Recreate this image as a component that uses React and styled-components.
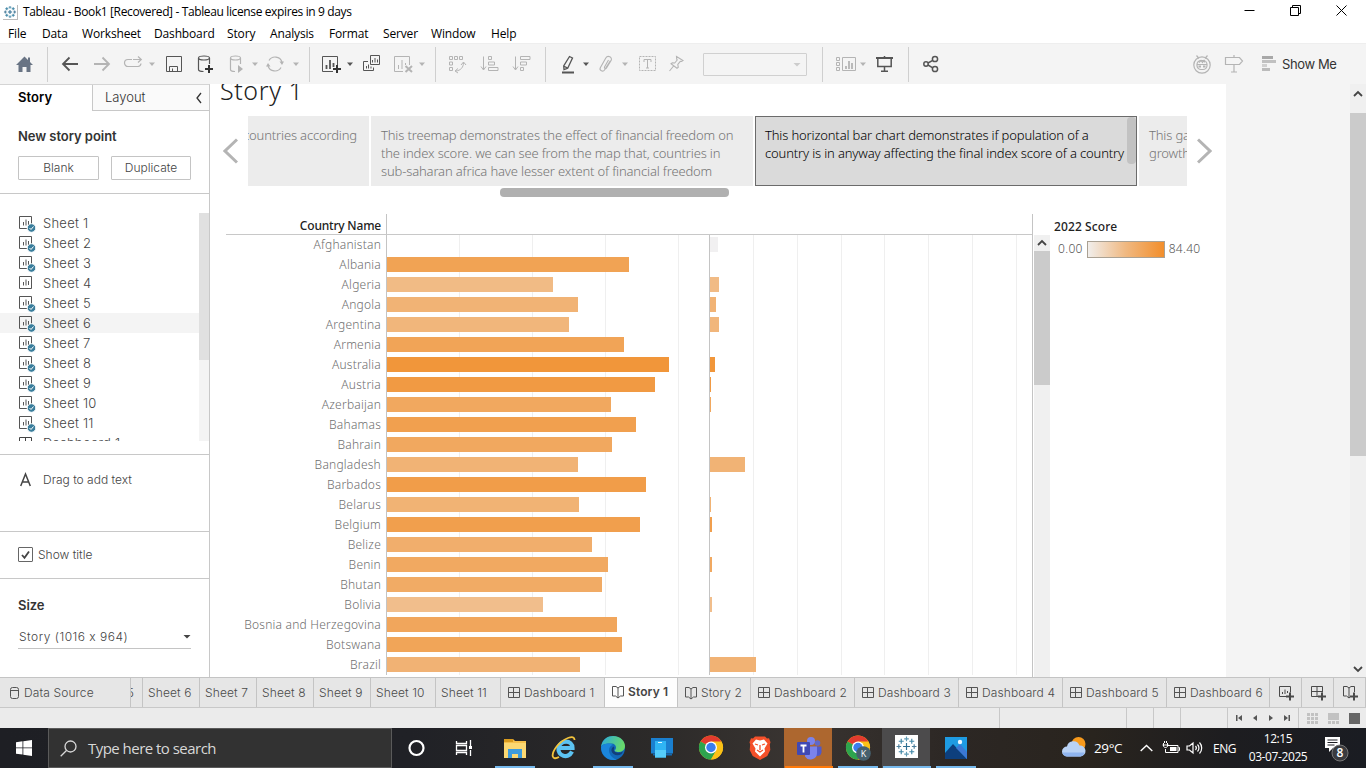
import React from 'react';
import styled, { createGlobalStyle, css } from 'styled-components';

const Global = createGlobalStyle`
  *, *::before, *::after { box-sizing: border-box; }
  body { margin: 0; background: #fff; overflow: hidden; }
  svg { display: block; flex: none; }
`;

const UI = '"Open Sans", "Noto Sans", sans-serif';
const BENTON = 'Inter, "Noto Sans", sans-serif';
const BOOK = '"Noto Sans", "Open Sans", sans-serif';

const Window = styled.div`
  width: 1366px; height: 768px; display: flex; flex-direction: column; overflow: hidden;
  font-family: ${BENTON}; color: #333;
`;

/* ---------- title bar and menus ---------- */
const TitleBar = styled.header`
  height: 24px; display: flex; align-items: center; padding-left: 3px; font: 12px/24px ${UI}; color: #000;
`;
const LogoBox = styled.div`
  width: 15px; height: 15px; border-right: 1px solid #bbb; border-bottom: 1px solid #bbb; margin-right: 5px;
`;
const WindowTitle = styled.span`flex: 1; letter-spacing: -0.37px; white-space: pre;`;
const WindowControls = styled.div`display: flex; gap: 35px; padding-right: 19px; margin-top: -4px;`;
const MenuBar = styled.nav`
  height: 19px; display: flex; align-items: center; padding-left: 8px; font: 12px/19px ${UI}; color: #000;
`;
const MenuItem = styled.span`width: ${p => p.$w}px; letter-spacing: -0.15px; white-space: nowrap;`;

/* ---------- toolbar ---------- */
const Toolbar = styled.div`
  height: 41px; background: #f4f4f4; display: flex; align-items: center; border-top: 1px solid #eee;
`;
const Tool = styled.div`
  width: ${p => p.$w || 20}px; height: 20px; margin-left: ${p => p.$gap || 0}px;
  color: ${p => (p.$off ? '#b4b4b4' : '#555')};
`;
const Separator = styled.div`width: 1px; height: 35px; background: #cfcfcf; margin-left: ${p => p.$gap}px;`;
const ToolSelect = styled.div`
  width: 104px; height: 23px; border: 1px solid #d0d0d0; border-radius: 1px; margin-left: 16px;
  display: flex; align-items: center; justify-content: flex-end; padding-right: 5px; color: #ccc;
`;
const ShowMe = styled.span`font: 13px/20px ${BENTON}; color: #333; margin-left: 4px; letter-spacing: -0.4px; white-space: nowrap;`;

/* ---------- workspace ---------- */
const Workspace = styled.main`height: 593px; display: flex;`;
const Sidebar = styled.aside`
  width: 210px; border-right: 1px solid #c8c8c8; border-top: 1px solid #d4d4d4; display: flex; flex-direction: column;
`;
const PaneTabs = styled.div`height: 26px; display: flex; font-size: 13px; line-height: 25px;`;
const ActivePane = styled.div`width: 92px; padding-left: 18px; font-weight: 600; color: #000; letter-spacing: 0.05px;`;
const OtherPane = styled.div`
  flex: 1; border-left: 1px solid #c8c8c8; border-bottom: 1px solid #c8c8c8; background: #fafafa; color: #333;
  padding: 0 6px 0 12px; display: flex; justify-content: space-between; align-items: center; font-weight: 300;
`;
const Section = styled.section`
  height: ${p => p.$h}px; border-bottom: ${p => (p.$last ? 0 : 1)}px solid #c8c8c8;
`;
const NewPoint = styled(Section)`padding: 15px 18px 0;`;
const Heading = styled.h2`
  margin: 0; font: 600 13px/20px ${BENTON}; color: #333; letter-spacing: -0.05px;
`;
const ButtonRow = styled.div`display: flex; gap: 12px; margin-top: 10px;`;
const PaneButton = styled.button`
  width: ${p => p.$w}px; height: 24px; padding: 0 0 1px; background: #fff; border: 1px solid #c4c4c4; border-radius: 1px;
  font: 300 12px/20px ${BENTON}; color: #444; letter-spacing: 0px;
`;
const SheetSection = styled(Section)`padding-top: 19px; display: flex; align-items: flex-start;`;
const SheetList = styled.ul`
  flex: 1; height: 228px; overflow: hidden; margin: 0; padding: 0; list-style: none;
`;
const SheetRow = styled.li`
  height: 20px; display: flex; align-items: center; padding-left: 18px; gap: 5px; font-size: 13px; font-weight: 300; color: #444;
  letter-spacing: 0.25px; background: ${p => (p.$hover ? '#f4f4f4' : 'transparent')};
`;
const PaneTrack = styled.div`width: 10px; height: 228px; background: #f4f4f4;`;
const PaneThumb = styled.div`height: 147px; background: #e0e0e0;`;
const DragText = styled(Section)`
  display: flex; padding: 15px 0 0 20px; gap: 12px; font-size: 12px; font-weight: 300; line-height: 20px; color: #444;
`;
const CheckSection = styled(Section)`
  display: flex; align-items: center; gap: 5px; padding: 0 0 1px 18px; font-size: 12px; font-weight: 300; color: #444;
`;
const CheckBox = styled.span`
  width: 15px; height: 15px; border: 1px solid #666; border-radius: 1px; display: flex; color: #444;
`;
const SizeSection = styled(Section)`padding: 16px 18px 0;`;
const SizeSelect = styled.div`
  height: 23px; margin-top: 11px; border-bottom: 1px solid #c4c4c4; display: flex; justify-content: space-between;
  align-items: center; padding: 0 0 2px 1px; font-size: 12px; font-weight: 300; color: #444; letter-spacing: 0.5px;
`;

/* ---------- story canvas ---------- */
const Canvas = styled.div`width: 1016px; height: 593px; overflow: hidden; background: #fff; font-family: ${BOOK};`;
const StoryTitle = styled.h1`
  margin: -10px 0 0 10px; height: 42px; font: 300 25px/32px ${BOOK}; color: #222; letter-spacing: 0.6px;
`;
const Navigator = styled.div`height: 70px; display: flex; align-items: center;`;
const Arrow = styled.div`width: ${p => p.$w}px; padding-left: ${p => p.$pad}px; color: #b4b4b4; margin-top: -1px;`;
const Points = styled.div`width: 939px; height: 70px; display: flex; gap: 2px; overflow: hidden; margin-right: 10px;`;
const Point = styled.div`
  flex: none; width: ${p => p.$w}px; height: 70px; display: flex; background: #ececec; color: #757575;
  font: 300 13px/18px ${BOOK}; padding: 10px 0 0 10px; letter-spacing: -0.15px; white-space: pre;
  ${p => p.$clipLeft && css`justify-content: flex-end; padding: 10px 12px 0 0;`}
  ${p => p.$current && css`
    background: #dadada; border: 1px solid #6b6b6b; color: #000; justify-content: space-between; padding: 9px 0 0 9px;
  `}
`;
const PointThumb = styled.div`flex: none; width: 9px; height: 47px; margin-top: -9px; background: #c2c2c2; border-radius: 4px;`;
const NavScroll = styled.div`width: 229px; height: 9px; margin: 2px 0 17px 290px; background: #b0b0b0; border-radius: 4px;`;

const Viz = styled.div`display: flex; height: 463px;`;
const Table = styled.div`width: 807px; margin-left: 16px; border-right: 1px solid #c4c4c4;`;
const TableHead = styled.div`height: 21px; display: flex; border-bottom: 1px solid #c8c8c8;`;
const HeadCell = styled.div`
  width: 161px; border-right: 1px solid #c4c4c4; padding: 2px 5px 0 0; text-align: right;
  font: 500 12px/20px ${BOOK}; color: #222; letter-spacing: -0.2px;
`;
const Row = styled.div`height: 20px; display: flex;`;
const RowName = styled.div`
  width: 161px; border-right: 1px solid #c4c4c4; padding-right: 5px; text-align: right; white-space: nowrap;
  font: 300 12px/20px ${BOOK}; color: #6e6e6e; letter-spacing: 0.22px;
`;
const Lane = styled.div`
  width: ${p => p.$w}px; padding-top: 2px;
  background: repeating-linear-gradient(90deg, transparent 0 ${p => p.$step - 1}px, #efefef ${p => p.$step - 1}px ${p => p.$step}px);
  ${p => p.$axis && css`border-right: 1px solid #c4c4c4;`}
`;
const Bar = styled.div`height: 15px;`;
const Track = styled.div`
  width: ${p => p.$w}px; margin: ${p => p.$m}; background: #f0f0f0; display: flex; flex-direction: column;
  align-items: center; color: #444;
`;
const TrackButton = styled.div`
  flex: none; height: ${p => p.$h}px; display: flex; align-items: center; ${p => p.$end && css`margin-top: auto;`}
`;
const TrackThumb = styled.div`flex: none; width: 100%; height: ${p => p.$h}px; background: #cbcbcb;`;
const Legend = styled.div`margin-left: 4px; font-size: 12px; line-height: 20px;`;
const LegendTitle = styled.div`margin-top: 3px; font-weight: 500; letter-spacing: 0.1px; color: #222;`;
const LegendScale = styled.div`
  display: flex; align-items: center; padding: 2px 0 0 4px; color: #555; font-weight: 300; letter-spacing: 0.3px;
`;
const Ramp = styled.div`
  width: 78px; height: 17px; margin: 0 4px; border: 1px solid #aaa193;
  background: linear-gradient(90deg, #f1eeeb, #f0b880 50%, #f28e2b);
`;
const Gutter = styled.div`flex: 1; background: #f4f4f4;`;

/* ---------- sheet tabs and status ---------- */
const TabStrip = styled.div`
  height: 31px; display: flex; background: #e6e6e6; border-top: 1px solid #c4c4c4; border-bottom: 1px solid #c8c8c8;
`;
const Tab = styled.div`
  width: ${p => p.$w}px; height: 29px; border-right: 1px solid #c4c4c4; display: flex; align-items: center;
  padding-left: ${p => p.$pad || 5}px; gap: ${p => p.$gap || 4}px; overflow: hidden; white-space: nowrap; font-size: 12px;
  font-weight: 300; color: #4a4a4a; letter-spacing: 0.12px;
  ${p => p.$tail && css`justify-content: flex-end; padding: 0 8px 0 0;`}
  ${p => p.$active && css`background: #fdfdfd; font-weight: 600; color: #444; padding-bottom: 2px;`}
`;
const StatusBar = styled.div`height: 20px; background: #ebebeb; display: flex; color: #555;`;
const StatusCell = styled.div`
  width: ${p => p.$w}px; border-right: ${p => (p.$last ? 0 : 1)}px solid #c8c8c8; display: flex; align-items: center;
  padding-left: ${p => p.$pad || 0}px; gap: ${p => p.$gap || 0}px;
`;

/* ---------- taskbar ---------- */
const Taskbar = styled.footer`
  height: 40px; display: flex; color: #fff; font-family: ${UI};
  background: linear-gradient(90deg, #1e1f24 0%, #202126 30%, #2c2a29 48%, #393431 58%, #2c2724 70%, #29241e 80%, #1d1d20 90%, #1a1c22 100%);
`;
const StartButton = styled.div`width: 48px; display: flex; align-items: center; justify-content: center;`;
const SearchBox = styled.div`
  width: 344px; background: #323232; border: 1px solid #5a5a5a; display: flex; align-items: center; padding-left: 11px;
  gap: 11px; font-size: 15px; color: #d8d8d8; letter-spacing: -0.53px;
`;
const AppButton = styled.div`
  width: 49px; height: 40px; display: flex; flex-direction: column; align-items: center; padding-top: 7px;
  justify-content: space-between;
  ${p => p.$bg && css`background: linear-gradient(90deg, ${p.$bg} 48px, transparent 48px);`}
`;
const RunningLine = styled.div`width: ${p => p.$w || 40}px; height: 2px; background: ${p => p.$c || 'transparent'};`;
const Tray = styled.div`flex: 1; display: flex; align-items: center; padding-left: 81px;`;
const TrayText = styled.span`
  font-size: ${p => p.$size || 12}px; width: ${p => p.$w}px; margin-left: ${p => p.$gap}px; white-space: nowrap;
  letter-spacing: ${p => p.$ls || 0}px;
`;
const TrayIcon = styled.div`margin-left: ${p => p.$gap}px;`;
const Clock = styled.div`
  width: 64px; margin-left: 7px; font-size: 12px; line-height: 18px; text-align: center; letter-spacing: -0.4px; white-space: nowrap;
`;

/* ---------- drawings ---------- */
const Svg = ({ w = 20, h = 20, children, sw = 1 }) => (
  <svg width={w} height={h} viewBox={`0 0 ${w} ${h}`} fill="none" stroke="currentColor" strokeWidth={sw}>{children}</svg>
);
const Caret = ({ wide }) => (
  <svg width="8" height="20" viewBox="0 0 8 20" fill="currentColor"><path d={wide ? 'M.5 9h7L4 12.500z' : 'M1 8.500h6L4 12z'} /></svg>
);
const Chevron = ({ w, h, d, sw = 2 }) => <Svg w={w} h={h} sw={sw}><path d={d} /></Svg>;

const PLUSES = [
  [12, 12, 3.6, '#2f6f93'], [12, 4, 2.4, '#5f9bb5'], [12, 20, 2.4, '#5f9bb5'], [4, 12, 2.4, '#4d7f9c'], [20, 12, 2.4, '#4d7f9c'],
  [6.5, 6.5, 2.6, '#3f86a6'], [17.5, 6.5, 2.6, '#3f86a6'], [6.5, 17.5, 2.6, '#3f86a6'], [17.5, 17.5, 2.6, '#3f86a6'],
];
const TableauMark = ({ size, sw = 1.2 }) => (
  <svg width={size} height={size} viewBox="0 0 24 24" fill="none">
    <rect width="24" height="24" fill="#fff" />
    {PLUSES.map(([x, y, r, c]) => (
      <path key={`${x}-${y}`} d={`M${x - r} ${y}h${2 * r}M${x} ${y - r}v${2 * r}`} stroke={c} strokeWidth={sw} />
    ))}
  </svg>
);

const Plus = ({ x, y }) => <path d={`M${x - 4} ${y}h8M${x} ${y - 4}v8`} stroke="#333" strokeWidth="2" />;
const tools = {
  home: <Svg><path d="M2 11L10.500 2.500L14 6V3.500h2V8L19 11h-2.500v7h-4v-5h-4v5h-4v-7z" fill="#697484" stroke="none" /></Svg>,
  back: <Svg sw={1.8}><path d="M18 10H3M9.500 3.500L3 10l6.500 6.500" /></Svg>,
  forward: <Svg sw={1.8}><path d="M2 10h15M10.500 3.500L17 10l-6.500 6.500" /></Svg>,
  replay: <Svg sw={1.2}><path d="M9 5.500H5a3.500 3.500 0 0 0 0 7h10a3.500 3.500 0 0 0 3-3M10 5.500h8M15 2.500l3.300 3L15 8.500" /></Svg>,
  save: <Svg><path d="M2.500 2.500h15v15h-15zM5.500 17.500v-5h8v5M8.500 14.500v3" /></Svg>,
  data: <Svg sw={1.2}><ellipse cx="8" cy="4" rx="5.500" ry="2" /><path d="M2.500 4v11.500c0 1.200 2 2 5 2M13.500 4v6" /><Plus x={13} y={15} /></Svg>,
  runData: <Svg sw={1.2}><ellipse cx="7.500" cy="4" rx="5" ry="2" /><path d="M2.500 4v11.500c0 1.200 2 2 4.500 2M12.500 4v6" /><path d="M10 11l5 4-5 4z" fill="currentColor" stroke="none" /></Svg>,
  refresh: <Svg sw={1.2}><path d="M17 8A7.200 7.200 0 0 0 4 6.500M3 12a7.200 7.200 0 0 0 13 1.500" /><path d="M14.500 7.500h4.500l-2 3.500zM1 12.500h4.500L3 9z" fill="currentColor" stroke="none" /></Svg>,
  newSheet: <Svg><path d="M12 17.500H1.500v-15h15V11" /><path d="M5.500 11v4M9 6v9M12.500 9v4" strokeWidth="1.800" /><Plus x={16} y={15} /></Svg>,
  duplicate: <Svg><path d="M8.500 1.500h9v9h-9zM6 7.500H1.500v9h10v-3M10.500 6v2.500M13 4v4.500M15.500 5.500v3M4.500 12v2.500M6.500 10.500v4M9 12.500v2" /></Svg>,
  clear: <Svg><path d="M10 17.500H1.500v-15h15V11M5.500 11v4M9 6v9M12.500 9v2" /><path d="M12.500 12l6.500 6M19 12l-6.500 6" strokeWidth="2" /></Svg>,
  swap: <Svg><path d="M2.500 2.500h3v3h-3zM7.500 2.500h3v3h-3zM12.500 2.500h3v3h-3zM2.500 8h3v3h-3zM2.500 13.500h3v3h-3z" /><path d="M16.500 8.500c0 5-3 8-7.500 8.500M14 11l2.500-3 2.500 3M11 14.500l-3 2.500 3 2" /></Svg>,
  asc: <Svg><path d="M3.500 2.500v13M1 12.500l2.500 3.500L6 12.500M8.500 2.500h3v3h-3zM8.500 8h6v3h-6zM8.500 13.500h9.500v3H8.500z" /></Svg>,
  desc: <Svg><path d="M3.500 2.500v13M1 12.500l2.500 3.500L6 12.500M8.500 2.500H18v3H8.500zM8.500 8h6v3h-6zM8.500 13.500h3v3h-3z" /></Svg>,
  highlight: <Svg sw={1.3}><path d="M11.500 2.500l3 1.500-4.800 10.200-3.700 1.300-.3-3.500zM5.500 12l4.200 2.200" /><path d="M4 18.500h12" strokeWidth="2" /></Svg>,
  clip: <Svg sw={1.100}><path d="M13.500 6.500L7.500 16c-1.500 2.400-5.500.5-4.200-2.200L8.800 4c2-3.300 7-.7 5.300 2.600L9.500 14c-.8 1.200-2.600.3-2-1L11.500 6" /></Svg>,
  text: <Svg><rect x="1.500" y="2.500" width="16" height="14" strokeDasharray="2 1" /><path d="M6 8V5.500h7V8M9.500 5.500V14M8 14h3" /></Svg>,
  pin: <Svg sw={1.100}><path d="M9.500 2.500l6.500 4-1.500 1-1.200-.2-2.500 3.200.5 2.800-1.300 1-6-4.500 1.300-1 2.400.2 2.500-3-.5-1zM7 11.500L2.500 17" /></Svg>,
  cards: <Svg w={22}><path d="M1.500 3.500h3v3h-3zM1.500 8.500h3v3h-3zM1.500 13.500h3v3h-3zM7.500 3.500h13v13h-13z" /><path d="M11 12v3M14 7v8M17 9v6" strokeWidth="1.800" /></Svg>,
  present: <Svg sw={1.500}><path d="M2 4h17" strokeWidth="2" /><path d="M3.800 4.500v8h13.400v-8M10.500 12.500V17M7 17.200h7M10.500 2v2" /></Svg>,
  share: <Svg sw={1.500}><circle cx="5" cy="10" r="2.200" /><circle cx="14" cy="5" r="2.600" /><circle cx="14" cy="15" r="2.600" /><path d="M7 9l4.800-2.700M7 11l4.800 2.800" /></Svg>,
  robot: <Svg sw={1.200}><circle cx="10" cy="11" r="8.200" /><rect x="5" y="6.500" width="10" height="9" rx="4" /><path d="M7 4.500L4.500 1.500M13 4.500l2.500-3M5 10.500h10M7 8.500l2-2 1.500 2 1.500-2 1 2" /><path d="M6.500 12.500h2.500M11 12.500h2.500" strokeWidth="2" /></Svg>,
  sign: <Svg sw={1.200}><path d="M10 1v2M1.500 3.500h14l3 3.500-3 3.500h-14zM10 10.500v7.500M7 18h6" /></Svg>,
  showMe: <Svg sw={3}><path d="M4 3.500h11" stroke="#a8a8a8" /><path d="M4 7.500h14" stroke="#c0c0c0" /><path d="M4 11.500h5" stroke="#d0d0d0" /><path d="M4 15.500h8" stroke="#bbb" /></Svg>,
};

const SheetIcon = ({ used }) => (
  <svg width="20" height="20" viewBox="0 0 20 20" fill="none" stroke="#555">
    <path d="M1.500 3.500h12v12h-12zM5.500 9v3.500M8 6.500v6M10.500 8v4" />
    {used && <><circle cx="13.500" cy="15" r="4.300" fill="#3a7e9c" stroke="#fff" /><path d="M11.500 15l1.500 1.500 2.500-3" stroke="#fff" /></>}
  </svg>
);
const DashIcon = ({ size = 12 }) => (
  <svg width={size} height={size} viewBox="0 0 12 12" fill="none" stroke="#555"><path d="M.5.500h11v10H.5zM5.500.500v10M.5 5.500h11" /></svg>
);
const BookIcon = () => (
  <svg width="12" height="14" viewBox="0 0 12 14" fill="none" stroke="#555">
    <path d="M6 3L4 1.500H.5v9.500h3L6 13l2.500-2h3V1.500H8zM6 3v10" />
  </svg>
);
const DataIcon = () => (
  <svg width="9" height="12" viewBox="0 0 9 12" fill="none" stroke="#555"><rect x=".5" y=".5" width="8" height="11" rx="2" /><path d="M.5 3.500h8" /></svg>
);

const Chrome = ({ badge }) => (
  <svg width="26" height="26" viewBox="0 0 26 26">
    <circle cx="13" cy="12.500" r="12" fill="#fbc116" />
    <path d="M13 12.500L2.600 6.500A12 12 0 0 1 23.400 6.500z" fill="#e33b2e" />
    <path d="M2.600 6.500A12 12 0 0 0 13 24.500L18.200 15.500 13 12.500z" fill="#2da44e" />
    <path d="M13 6.500h10.400a12 12 0 0 1-10.400 18l5.200-9z" fill="#fbc116" />
    <circle cx="13" cy="12.500" r="6" fill="#fff" /><circle cx="13" cy="12.500" r="4.700" fill="#3b7ded" />
    {badge && <><circle cx="18.500" cy="18.500" r="7.300" fill="#46606e" /><text x="18.500" y="21.800" fontSize="9" fill="#fff" textAnchor="middle" fontFamily="Open Sans">K</text></>}
  </svg>
);
const apps = {
  cortana: <Svg w={26} h={26} sw={2.200}><circle cx="12.500" cy="13" r="7" /></Svg>,
  taskView: <Svg w={26} h={26} sw={1.300}><path d="M3.500 6v2.500h10V6M3.500 20v-2.500h10V20M3.500 10.500h10v5h-10zM17.500 5v6M17.500 15v6" /><path d="M16 11h3v3h-3z" fill="currentColor" stroke="none" /></Svg>,
  explorer: <svg width="26" height="26" viewBox="0 0 26 26"><path d="M2 4h9l2 2h11v17H2z" fill="#f5c04b" /><path d="M2 8h22v15H2z" fill="#fbd872" /><path d="M2 4h9v3H2z" fill="#d99b1e" /><path d="M6 23v-9h14v9h-4v-4h-6v4z" fill="#3d9bdc" /></svg>,
  ie: <svg width="26" height="26" viewBox="0 0 26 26" fill="none"><path d="M21 16.500c-4 8-14.500 4.500-13.500-3.500C9 4.500 21.500 4.500 21.500 13H9" stroke="#5cc3f2" strokeWidth="4.200" /><path d="M8 22C1 26-1 20 6 11 13 3 24-1 23.500 5" stroke="#f3c33b" strokeWidth="1.800" /></svg>,
  edge: (
    <svg width="26" height="26" viewBox="0 0 26 26">
      <defs><linearGradient id="edgeTop" x1="0" y1="0" x2="1" y2=".3"><stop offset="0" stopColor="#2aa9e0" /><stop offset="1" stopColor="#67d96b" /></linearGradient></defs>
      <circle cx="13" cy="13" r="12" fill="#1268b8" />
      <path d="M1 12C2 4 8 1 13 1c8 0 12 6 12 10 0 4-3 6-7 6-2 0-4-1-3-2 2-2 1-6-3-6.500C7 8 2 9 1 12z" fill="url(#edgeTop)" />
      <path d="M1 12c2-3.500 8-4.500 12-2-3 .5-5 4-3.500 8 1.200 3.500 4 6 7.500 6.400C9 27 1 21 1 12z" fill="#1b86dc" />
      <path d="M14.500 13c-2.500 3 2 6.500 8.500 3.500l-1.500 2.500c-4 2.500-9 1-10-3-.3-1.500.5-3.500 2-4.500z" fill="#123f7a" />
    </svg>
  ),
  phone: <svg width="26" height="26" viewBox="0 0 26 26"><path d="M2 3h22v15.500H2z" fill="#1a7fcf" /><path d="M17 18.500h6v2h-6zM4 18.500h3v2H4z" fill="#1468ae" /><path d="M6 6h11v16.500H6z" fill="#2fb4f4" /><path d="M6 15h11v7.500H6z" fill="#55cdfb" /><path d="M9 7.500h4" stroke="#e0f5ff" /></svg>,
  chrome: <Chrome />,
  brave: <svg width="26" height="26" viewBox="0 0 26 26"><path d="M8 1.500h10l2 2 2-.2 1.500 4-.7 2.200.5 5.500-3 6L13 25l-7.300-4-3-6 .5-5.500L2.500 7.300 4 3.300l2 .2z" fill="#f4502a" /><path d="M13 5.500l4-1 3.500 4-3 5 .5 3-5 5-5-5 .5-3-3-5L9 4.500z" fill="#fff" /><path d="M8 9l3 1M18 9l-3 1M13 10v5M10 15l3 2 3-2" stroke="#f4502a" strokeWidth="1.300" fill="none" /></svg>,
  teams: <svg width="26" height="26" viewBox="0 0 26 26"><circle cx="21.500" cy="8" r="2.800" fill="#6068c8" /><path d="M17 11.500h8.500v6a4 4 0 0 1-7 2z" fill="#5059c9" /><circle cx="15" cy="6" r="4" fill="#7b83eb" /><path d="M10 11.500h11v7a6.500 6.500 0 0 1-12 3z" fill="#7b83eb" /><rect x="1" y="7" width="13" height="13" rx="1" fill="#4049b4" /><path d="M4.500 10.500h6M7.500 10.500v7" stroke="#fff" strokeWidth="1.800" /></svg>,
  chromeK: <Chrome badge />,
  tableau: <TableauMark size={23} />,
  photos: <svg width="26" height="26" viewBox="0 0 26 26"><path d="M2 2h22v22H2z" fill="#1e9be2" /><path d="M2 18l8-9 14 15H2z" fill="#0d3f7d" /><path d="M13 13l4-4 7 8v7z" fill="#3b78d4" /><circle cx="17" cy="7" r="2.200" fill="#eaf7ff" /></svg>,
};

/* ---------- data ---------- */
const COUNTRIES = [
  ['Afghanistan', 0, 8], ['Albania', 242, 0], ['Algeria', 166, 9], ['Angola', 191, 6], ['Argentina', 182, 9], ['Armenia', 237, 0],
  ['Australia', 282, 5], ['Austria', 268, 1], ['Azerbaijan', 224, 1], ['Bahamas', 249, 0], ['Bahrain', 225, 0],
  ['Bangladesh', 191, 35], ['Barbados', 259, 0], ['Belarus', 192, 1], ['Belgium', 253, 2], ['Belize', 205, 0], ['Benin', 221, 2],
  ['Bhutan', 215, 0], ['Bolivia', 156, 2], ['Bosnia and Herzegovina', 230, 0], ['Botswana', 235, 0], ['Brazil', 193, 46],
];
const scoreColor = s => `rgb(241, ${Math.round(240 - s * 0.32)}, ${Math.round(241 - s * 0.65)})`;

const MENUS = [['File', 34], ['Data', 40], ['Worksheet', 72], ['Dashboard', 73], ['Story', 43], ['Analysis', 59], ['Format', 54], ['Server', 48], ['Window', 60], ['Help', 40]];
const SHEETS = [1, 2, 3, 4, 5, 6, 7, 8, 9, 10, 11];

const TOOLS = [
  ['home', 14], ['|', 13], ['back', 12, 0], ['forward', 12, 1], ['replay', 11, 1], ['v', 5, 1], ['save', 8], ['data', 12], ['runData', 12, 1],
  ['v', 3, 1], ['refresh', 6, 1], ['v', 7, 1], ['|', 9], ['newSheet', 11], ['v', 5], ['duplicate', 8], ['clear', 11, 1], ['v', 5, 1], ['|', 9],
  ['swap', 11, 1], ['asc', 13, 1], ['desc', 12, 1], ['|', 13], ['highlight', 12], ['v', 4], ['clip', 7, 1], ['v', 4, 1], ['text', 9, 1], ['pin', 9, 1],
  ['select'], ['|', 15], ['cards', 12, 1], ['v', 2, 1], ['present', 7], ['|', 14], ['share', 12],
];

const TASKS = [
  ['cortana'], ['taskView'], ['explorer', '#76b9ed'], ['ie'], ['edge', '#76b9ed'], ['phone'], ['chrome'], ['brave'],
  ['teams', '#ff7a0a', '#ad672f', 48], ['chromeK', '#76b9ed'], ['tableau', '#76b9ed', '#4c4b4c', 48], ['photos', '#76b9ed'],
];

export default function App() {
  return (
    <Window>
      <Global />
      <TitleBar>
        <LogoBox><TableauMark size={14} sw={1.8} /></LogoBox>
        <WindowTitle>Tableau - Book1 [Recovered] - Tableau license expires in 9 days</WindowTitle>
        <WindowControls>
          <Svg w={11} h={11}><path d="M.5 5.500h10" /></Svg>
          <Svg w={11} h={11}><path d="M.5 2.500h8v8h-8zM2.500 2.500v-2h8v8h-2" /></Svg>
          <Svg w={11} h={11}><path d="M.5.500l10 10M10.500.500l-10 10" /></Svg>
        </WindowControls>
      </TitleBar>
      <MenuBar>{MENUS.map(([m, w]) => <MenuItem key={m} $w={w}>{m}</MenuItem>)}</MenuBar>

      <Toolbar>
        {TOOLS.map(([name, gap, off], i) => {
          if (name === '|') return <Separator key={i} $gap={gap} />;
          if (name === 'v') return <Tool key={i} $w={8} $gap={gap} $off={off}><Caret /></Tool>;
          if (name === 'select') return <ToolSelect key={i}><Caret wide /></ToolSelect>;
          return <Tool key={i} $gap={gap} $off={off} $w={name === 'cards' ? 22 : 20}>{tools[name]}</Tool>;
        })}
        <Tool $gap={251} $off>{tools.robot}</Tool>
        <Tool $gap={12} $off>{tools.sign}</Tool>
        <Tool $gap={14}>{tools.showMe}</Tool>
        <ShowMe>Show Me</ShowMe>
      </Toolbar>

      <Workspace>
        <Sidebar>
          <PaneTabs>
            <ActivePane>Story</ActivePane>
            <OtherPane>Layout<Chevron w={8} h={12} sw={1.3} d="M6 1L2 6l4 5" /></OtherPane>
          </PaneTabs>
          <NewPoint $h={83}>
            <Heading>New story point</Heading>
            <ButtonRow>
              <PaneButton $w={81}>Blank</PaneButton>
              <PaneButton $w={80}>Duplicate</PaneButton>
            </ButtonRow>
          </NewPoint>
          <SheetSection $h={261}>
            <SheetList>
              {SHEETS.map(n => <SheetRow key={n} $hover={n === 6}><SheetIcon used={n !== 4} />Sheet {n}</SheetRow>)}
              <SheetRow>
                <Svg><path d="M1.500 4.500h12v11h-12zM7.500 4.500v11M1.500 10h12" /></Svg>Dashboard 1
              </SheetRow>
            </SheetList>
            <PaneTrack><PaneThumb /></PaneTrack>
          </SheetSection>
          <DragText $h={77}>
            <Svg w={11} h={20} sw={1.5}><path d="M.7 16L5.500 4l4.800 12M2.300 12h6.400" /></Svg>
            Drag to add text
          </DragText>
          <CheckSection $h={47}>
            <CheckBox><Svg w={13} h={13} sw={1.8}><path d="M3 7l2.500 2.800L10 3.500" /></Svg></CheckBox>
            Show title
          </CheckSection>
          <SizeSection $h={98} $last>
            <Heading>Size</Heading>
            <SizeSelect>Story (1016 x 964)<Caret wide /></SizeSelect>
          </SizeSection>
        </Sidebar>

        <Canvas>
          <StoryTitle>Story 1</StoryTitle>
          <Navigator>
            <Arrow $w={38} $pad={13}><Chevron w={15} h={26} sw={3} d="M14 1.500L2 13l12 11.500" /></Arrow>
            <Points>
              <Point $w={121} $clipLeft>countries according</Point>
              <Point $w={382}>{'This treemap demonstrates the effect of financial freedom on\nthe index score. we can see from the map that, countries in\nsub-saharan africa have lesser extent of financial freedom'}</Point>
              <Point $w={382} $current>{'This horizontal bar chart demonstrates if population of a\ncountry is in anyway affecting the final index score of a country'}<PointThumb /></Point>
              <Point $w={382}>{'This gantt chart demonstrates the\ngrowth of the index score'}</Point>
            </Points>
            <Arrow $w={15} $pad={0}><Chevron w={15} h={26} sw={3} d="M1 1.500L13 13 1 24.500" /></Arrow>
          </Navigator>
          <NavScroll />
          <Viz>
            <Table>
              <TableHead><HeadCell>Country Name</HeadCell></TableHead>
              {COUNTRIES.map(([name, score, pop]) => (
                <Row key={name}>
                  <RowName>{name}</RowName>
                  <Lane $w={323} $step={73} $axis><Bar style={{ width: score, background: scoreColor(score) }} /></Lane>
                  <Lane $w={322} $step={43.85}><Bar style={{ width: pop, background: scoreColor(score) }} /></Lane>
                </Row>
              ))}
            </Table>
            <Track $w={16} $m="21px 0 0 1px">
              <TrackButton $h={16}><Chevron w={10} h={8} sw={1.8} d="M1 6l4-4 4 4" /></TrackButton>
              <TrackThumb $h={134} />
            </Track>
            <Legend>
              <LegendTitle>2022 Score</LegendTitle>
              <LegendScale>0.00<Ramp />84.40</LegendScale>
            </Legend>
          </Viz>
        </Canvas>
        <Gutter />
        <Track $w={16} $m="0">
          <TrackButton $h={20}><Chevron w={10} h={8} sw={1.8} d="M1 6l4-4 4 4" /></TrackButton>
          <TrackButton $h={9} />
          <TrackThumb $h={343} />
          <TrackButton $h={17} $end><Chevron w={10} h={8} sw={1.8} d="M1 2l4 4 4-4" /></TrackButton>
        </Track>
      </Workspace>

      <TabStrip>
        <Tab $w={131} $pad={10} $gap={5}><DataIcon />Data Source</Tab>
        <Tab $w={12} $tail>5</Tab>
        {[6, 7, 8, 9].map(n => <Tab key={n} $w={57}>Sheet {n}</Tab>)}
        <Tab $w={65}>Sheet 10</Tab>
        <Tab $w={65}>Sheet 11</Tab>
        <Tab $w={104} $pad={7}><DashIcon />Dashboard 1</Tab>
        <Tab $w={73} $pad={7} $active><BookIcon />Story 1</Tab>
        <Tab $w={73} $pad={7}><BookIcon />Story 2</Tab>
        {[2, 3, 4, 5, 6].map(n => <Tab key={n} $w={n === 6 ? 103 : 104} $pad={7}><DashIcon />Dashboard {n}</Tab>)}
        <Tab $w={32} $pad={9}><Svg w={16} h={16}><path d="M8 11.500H.5v-10h11v6M3.500 7v2M6 4.500V9M8.500 6v2" /><path d="M7 11.500h8M11 7.500v8" strokeWidth="2" /></Svg></Tab>
        <Tab $w={32} $pad={9}><Svg w={16} h={16}><path d="M8 11.500H.5v-10h11v6M6 1.500v10M.5 6.500h11" /><path d="M7 11.500h8M11 7.500v8" strokeWidth="2" /></Svg></Tab>
        <Tab $w={32} $pad={9}><Svg w={16} h={16}><path d="M7 12.200L6 13l-2.500-2h-3V1.500H4L6 3l2-1.500h3.500V7M6 3v10" /><path d="M7 11.500h8M11 7.500v8" strokeWidth="2" /></Svg></Tab>
      </TabStrip>
      <StatusBar>
        <StatusCell $w={1000} /><StatusCell $w={127} /><StatusCell $w={27} /><StatusCell $w={27} /><StatusCell $w={47} />
        <StatusCell $w={71} $pad={7} $gap={8}>
          <svg width="8" height="8" fill="currentColor"><path d="M1 1h1.500v6H1zM7 1v6L3 4z" /></svg>
          <svg width="8" height="8" fill="currentColor"><path d="M6 1v6L2 4z" /></svg>
          <svg width="8" height="8" fill="currentColor"><path d="M2 1v6l4-3z" /></svg>
          <svg width="8" height="8" fill="currentColor"><path d="M5.500 1H7v6H5.500zM1 1v6l4-3z" /></svg>
        </StatusCell>
        <StatusCell $w={67} $pad={8} $gap={10} $last>
          <svg width="11" height="11" fill="#c2c2c2"><path d="M0 0h3v3H0zM4 0h3v3H4zM8 0h3v3H8zM0 4h3v3H0zM4 4h3v3H4zM8 4h3v3H8zM0 8h3v3H0zM4 8h3v3H4zM8 8h3v3H8z" /></svg>
          <svg width="11" height="11" fill="#c2c2c2"><path d="M0 0h11v7H0zM0 8h3v3H0zM4 8h3v3H4zM8 8h3v3H8z" /></svg>
          <svg width="11" height="11" fill="#666"><path d="M0 0h11v11H0z" /></svg>
        </StatusCell>
      </StatusBar>

      <Taskbar>
        <StartButton>
          <svg width="16" height="16" viewBox="0 0 16 16" fill="#fff"><path d="M0 2.200l6.500-.9v6.200H0zM7.300 1.200L16 0v7.500H7.300zM0 8.300h6.500v6.300L0 13.700zM7.300 8.300H16V16l-8.700-1.200z" /></svg>
        </StartButton>
        <SearchBox>
          <Svg w={17} h={17} sw={1.3}><circle cx="10.500" cy="6.500" r="5.500" /><path d="M6.500 10.500L.7 16.300" /></Svg>
          Type here to search
        </SearchBox>
        {TASKS.map(([name, line, bg, w]) => (
          <AppButton key={name} $bg={bg}>{apps[name]}<RunningLine $c={line} $w={w} /></AppButton>
        ))}
        <Tray>
          <svg width="26" height="24" viewBox="0 0 26 24"><circle cx="17.500" cy="8" r="7" fill="#f79a1c" /><path d="M6 20.500a5 5 0 0 1 0-10 6.500 6.500 0 0 1 12.500-1 5.500 5.500 0 0 1 1 11z" fill="#b9d2f5" /><path d="M6 20.500a5 5 0 0 1-4.500-4h22a5 5 0 0 1-4 4z" fill="#8fb4ee" /></svg>
          <TrayText $size={13.5} $w={30} $gap={7} $ls={-0.4}>29°C</TrayText>
          <TrayIcon $gap={16}><Chevron w={13} h={8} sw={1.4} d="M.7 7l5.800-5.500L12.300 7" /></TrayIcon>
          <TrayIcon $gap={9}>
            <Svg w={18} h={14}><path d="M6 4.500h10v7H6M16.500 6.500h1v3h-1M3.500 8v3.500H6M1.500 2v3c0 2 4 2 4 0V2M.5 4h6M2.500 0v2M4.500 0v2" /><path d="M8 6h6.500v4H8z" fill="#fff" stroke="none" /></Svg>
          </TrayIcon>
          <TrayIcon $gap={6}>
            <Svg w={18} h={14} sw={1.2}><path d="M1 5h2.500L7 2v10L3.500 9H1zM9.500 5a3 3 0 0 1 0 4M11.500 3.500a5 5 0 0 1 0 7M13.500 1.500a8 8 0 0 1 0 11" /></Svg>
          </TrayIcon>
          <TrayText $w={26} $gap={9} $ls={-0.5}>ENG</TrayText>
          <Clock>12:15<br />03-07-2025</Clock>
          <TrayIcon $gap={14}>
            <svg width="26" height="28" viewBox="0 0 26 28"><path d="M1 3h15v11H9l-4 4v-4H1z" fill="#fff" /><path d="M3.500 6h10M3.500 8.500h10M3.500 11h7" stroke="#1c1d22" /><circle cx="16" cy="19" r="8" fill="#3a3b3f" stroke="#777" /><text x="16" y="23.200" fontSize="12" fontWeight="600" fill="#fff" textAnchor="middle" fontFamily="Open Sans">8</text></svg>
          </TrayIcon>
        </Tray>
      </Taskbar>
    </Window>
  );
}
